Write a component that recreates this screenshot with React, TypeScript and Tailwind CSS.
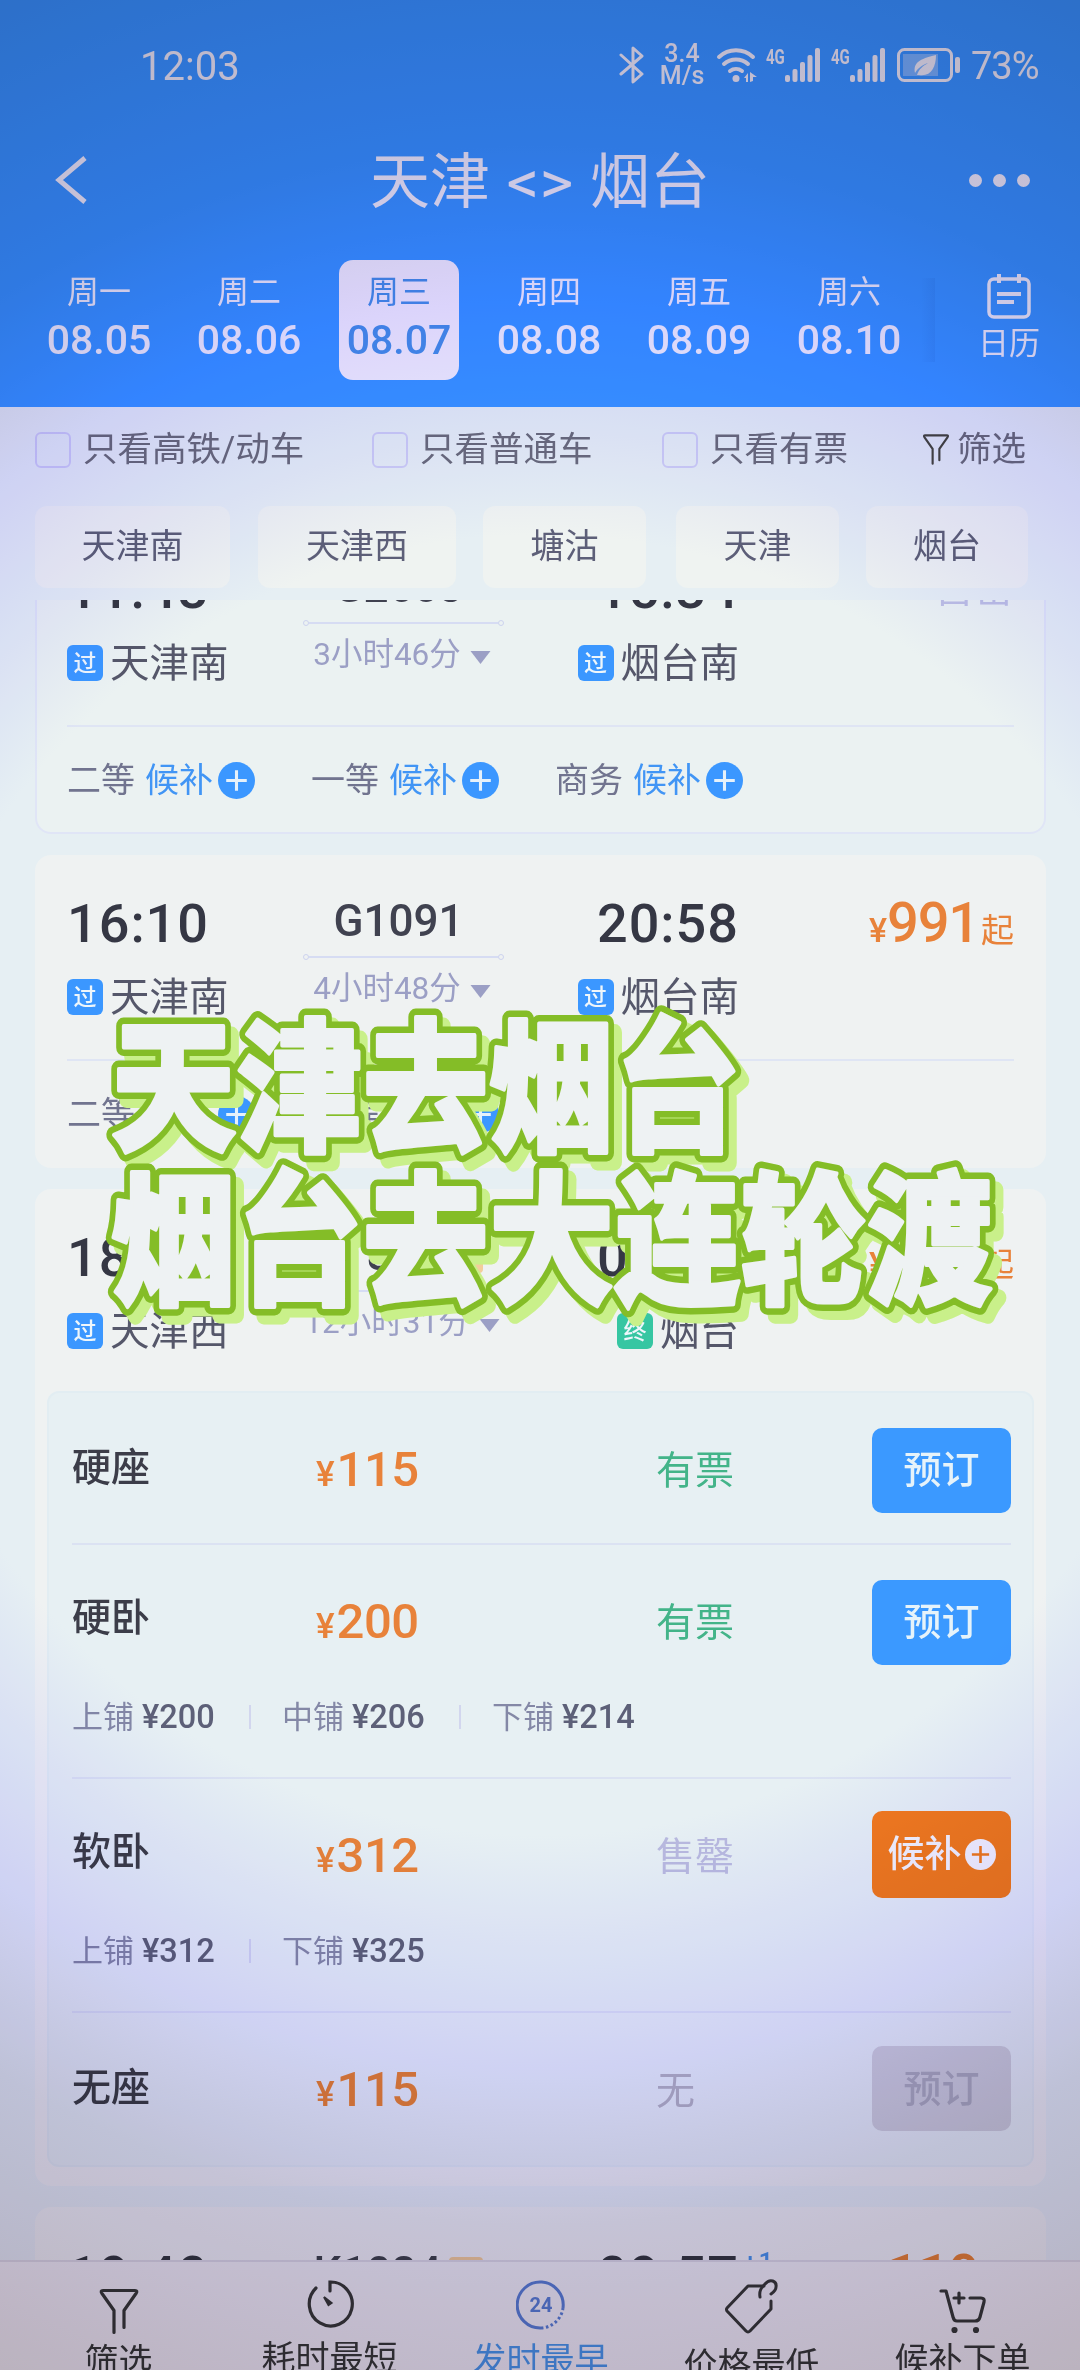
import type { ReactNode } from "react";

interface Stop {
	time: string;
	name: string;
	kind: "过" | "终";
	nextDay?: boolean;
}

interface Train {
	no: string;
	tag?: string;
	duration: string;
	from: Stop;
	to: Stop;
	price?: string;
}

interface Seat {
	name: string;
	price: string;
	status: "有票" | "售罄" | "无";
	berths?: { name: string; price: string }[];
}

const DATES = [
	{ week: "周一", date: "08.05" },
	{ week: "周二", date: "08.06" },
	{ week: "周三", date: "08.07", active: true },
	{ week: "周四", date: "08.08" },
	{ week: "周五", date: "08.09" },
	{ week: "周六", date: "08.10" },
];

const STATIONS = [
	{ name: "天津南", className: "w-[195px]" },
	{ name: "天津西", className: "ml-7 w-[198px]" },
	{ name: "塘沽", className: "ml-[27px] w-[163px]" },
	{ name: "天津", className: "ml-[30px] w-[163px]" },
	{ name: "烟台", className: "ml-[27px] w-[162px]" },
];

const TRAINS: Train[] = [
	{
		no: "G2603",
		duration: "3小时46分",
		from: { time: "11:48", name: "天津南", kind: "过" },
		to: { time: "15:34", name: "烟台南", kind: "过" },
	},
	{
		no: "G1091",
		duration: "4小时48分",
		from: { time: "16:10", name: "天津南", kind: "过" },
		to: { time: "20:58", name: "烟台南", kind: "过" },
		price: "991",
	},
	{
		no: "K1812",
		tag: "带",
		duration: "12小时31分",
		from: { time: "18:49", name: "天津西", kind: "过" },
		to: { time: "07:20", name: "烟台", kind: "终" },
		price: "115",
	},
	{
		no: "K1024",
		tag: "带",
		duration: "14小时17分",
		from: { time: "19:40", name: "天津", kind: "过" },
		to: { time: "09:57", name: "烟台", kind: "终", nextDay: true },
		price: "119",
	},
];

const SEATS: Seat[] = [
	{ name: "硬座", price: "115", status: "有票" },
	{
		name: "硬卧",
		price: "200",
		status: "有票",
		berths: [
			{ name: "上铺", price: "200" },
			{ name: "中铺", price: "206" },
			{ name: "下铺", price: "214" },
		],
	},
	{
		name: "软卧",
		price: "312",
		status: "售罄",
		berths: [
			{ name: "上铺", price: "312" },
			{ name: "下铺", price: "325" },
		],
	},
	{ name: "无座", price: "115", status: "无" },
];

const STATUS_COLOR = {
	有票: "text-[#43b489]",
	售罄: "text-[#b9bade]",
	无: "text-[#b4b4c2]",
};

const Signal = () => (
	<div className="flex h-[34px]">
		<span className="w-[19px] origin-left scale-x-75 text-[20px] leading-[18px] font-bold">
			4G
		</span>
		<svg width="36" height="34" viewBox="0 0 36 34" fill="currentColor">
			<rect x="0" y="27" width="5" height="7" rx="2" />
			<rect x="7.5" y="21" width="5" height="13" rx="2" />
			<rect x="15" y="14" width="5" height="20" rx="2" />
			<rect x="22.5" y="7" width="5" height="27" rx="2" />
			<rect x="30" y="0" width="5" height="34" rx="2" />
		</svg>
	</div>
);

const StatusBar = () => (
	<div className="flex h-[130px] items-center pr-[41px] pl-[140px] text-[#eef0f5]">
		<span className="mt-[3px] text-[40px] leading-none">12:03</span>
		<svg
			className="ml-auto"
			width="26"
			height="38"
			viewBox="0 0 26 38"
			fill="none"
			stroke="currentColor"
			strokeWidth="3"
			strokeLinejoin="round"
			strokeLinecap="round"
		>
			<path d="M2 9l21 19-9 8V2l9 8L2 28" />
		</svg>
		<div className="ml-[15px] flex w-[44px] flex-col items-center text-[25px] leading-[22px] font-medium">
			<span>3.4</span>
			<span>M/s</span>
		</div>
		<svg className="ml-[12px]" width="42" height="36" viewBox="0 0 42 36" fill="none">
			<g stroke="currentColor" strokeWidth="4" strokeLinecap="round">
				<path d="M3 10a25 25 0 0 1 34 0" />
				<path d="M8 17a18 18 0 0 1 24 0" />
				<path d="M14 24a10 10 0 0 1 12 0" />
			</g>
			<circle cx="20" cy="31.500" r="3.500" fill="currentColor" />
			<path d="M28 31l4-5v9h-2v-4zM34 25l7 5h-4v4l-3 1z" fill="currentColor" />
		</svg>
		<div className="ml-[8px] flex gap-[10px]">
			<Signal />
			<Signal />
		</div>
		<svg className="ml-[11px]" width="66" height="34" viewBox="0 0 66 34" fill="none">
			<rect x="1.500" y="1.500" width="53" height="31" rx="6" stroke="currentColor" strokeWidth="3" />
			<rect x="6" y="6" width="35" height="22" fill="currentColor" opacity="0.35" />
			<path
				d="M18 25c-2-10 4-14 21-18 0 12-5 22-17 20l-2 0c2-6 6-9 11-12-6 2-10 5-13 10z"
				fill="currentColor"
			/>
			<rect x="58" y="9" width="5" height="16" rx="2" fill="currentColor" />
		</svg>
		<span className="mt-[2px] ml-[8px] w-[68px] text-[38px] leading-none tracking-[-1px]">73%</span>
	</div>
);

const Header = () => (
	<header className="h-[407px] shrink-0 bg-[#3996ff] text-[#f2f3fa]">
		<StatusBar />
		<div className="flex h-[100px] items-center justify-between px-[50px]">
			<div className="w-[70px] pl-[2px]">
				<svg width="36" height="50" viewBox="0 0 36 50" fill="none" stroke="currentColor" strokeWidth="5">
					<path d="M33 3L7 25l26 22" />
				</svg>
			</div>
			<h1 className="mt-[6px] flex items-center gap-[19px] text-[60px] leading-none">
				<span>天津</span>
				<span className="inline-block scale-x-108">&lt;&gt;</span>
				<span>烟台</span>
			</h1>
			<div className="flex w-[70px] justify-end gap-[11px]">
				<i className="size-[13px] rounded-full bg-current" />
				<i className="size-[13px] rounded-full bg-current" />
				<i className="size-[13px] rounded-full bg-current" />
			</div>
		</div>
		<div className="flex pt-[30px] pl-[39px]">
			<div className="flex w-[882px] gap-[30px]">
				{DATES.map(({ week, date, active }) => (
					<div
						key={date}
						className={`flex h-[120px] w-[120px] shrink-0 flex-col items-center rounded-[14px] pt-[14px] ${
							active ? "bg-[#f4f2fb] text-[#4791e6]" : ""
						}`}
					>
						<span className="text-[32px] leading-[36px]">{week}</span>
						<span className="mt-[8px] text-[41px] leading-[44px] font-medium">{date}</span>
					</div>
				))}
			</div>
			<div className="h-[84px] w-[14px] self-center bg-linear-to-r from-transparent to-[#2f7ee6]/30" />
			<div className="ml-[43px] flex flex-col items-center pt-[14px]">
				<svg width="44" height="46" viewBox="0 0 44 46" fill="none" stroke="currentColor" strokeWidth="3.500">
					<rect x="2" y="5" width="40" height="38" rx="5" />
					<path d="M12 0v9M32 0v9M10 20h24M10 28h17" strokeWidth="4" />
				</svg>
				<span className="mt-[6px] text-[31px] leading-[36px]">日历</span>
			</div>
		</div>
	</header>
);

const Funnel = ({ className }: { className?: string }) => (
	<svg
		className={className}
		viewBox="0 0 40 46"
		fill="none"
		stroke="currentColor"
		strokeWidth="3.200"
		strokeLinejoin="round"
		strokeLinecap="round"
	>
		<path d="M15 44V22L3 5q-2-3 1-3h32q3 0 1 3L25 22v17" />
	</svg>
);

const Check = ({ className, children }: { className: string; children: ReactNode }) => (
	<label className={`flex items-center gap-[12px] ${className}`}>
		<i className="size-[36px] rounded-[6px] border-2 border-[#cdcdf3]" />
		{children}
	</label>
);

const Filters = () => (
	<section className="shrink-0">
		<div className="flex h-[85px] items-center pl-[35px] text-[34.500px] leading-none whitespace-nowrap text-[#6a6b7c]">
			<Check className="w-[337px]">只看高铁/动车</Check>
			<Check className="w-[290px]">只看普通车</Check>
			<Check className="w-[259px]">只看有票</Check>
			<Funnel className="mr-[6px] h-[31px] w-[30px] text-[#444]" />
			<span>筛选</span>
		</div>
		<div className="mt-[14px] flex h-[94px] pl-[35px] text-[34px] text-[#5d5f78]">
			{STATIONS.map(({ name, className }) => (
				<div
					key={name}
					className={`flex h-[82px] items-center justify-center rounded-[12px] bg-[#eff3f1] leading-none ${className}`}
				>
					<span className="-mt-[2px]">{name}</span>
				</div>
			))}
		</div>
	</section>
);

const Station = ({ name, kind }: Stop) => (
	<div className="mt-[26px] flex h-[40px] items-center gap-[7px]">
		<span
			className={`flex size-[36px] items-center justify-center rounded-[6px] text-[23px] leading-none font-medium text-[#eef6fb] ${
				kind === "过" ? "bg-[#3b97ff]" : "bg-[#36c6a2]"
			}`}
		>
			{kind}
		</span>
		<span className="mt-[1px] text-[39.500px] leading-[40px] text-[#55576a]">{name}</span>
	</div>
);

const TrainInfo = ({ no, tag, duration, from, to, price }: Train) => (
	<div className="grid h-[204px] grid-cols-[236px_201px_235px_1fr] pt-[42px]">
		<div>
			<div className="text-[54px] leading-[54px] font-medium tracking-[1px] text-[#353744]">{from.time}</div>
			<Station {...from} />
		</div>
		<div className="flex flex-col items-center pt-[2px]">
			<div className="mr-[10px] flex h-[45px] items-center gap-[8px] text-[44px] leading-[45px] font-medium text-[#404250]">
				{no}
				{tag && (
					<span className="flex size-[34px] items-center justify-center rounded-[4px] bg-[#f3cd9c] text-[24px] leading-none text-[#7d5232]">
						{tag}
					</span>
				)}
			</div>
			<div className="mt-[10px] flex w-full items-center">
				<i className="size-[6px] rounded-full border border-[#cdd3ef]" />
				<i className="h-[2px] flex-1 bg-[#d6dcf3]" />
				<i className="size-[6px] rounded-full border border-[#cdd3ef]" />
			</div>
			<div className="mt-[11px] mr-[3px] flex items-center gap-[9px] text-[31.500px] leading-[36px] whitespace-nowrap text-[#9b9fc5]">
				{duration}
				<svg className="mt-[5px]" width="21" height="14" viewBox="0 0 20 14" fill="currentColor">
					<path d="M0 0h20L10 13z" />
				</svg>
			</div>
		</div>
		<div className="flex flex-col items-end">
			<div className="relative text-[54px] leading-[54px] font-medium tracking-[1px] text-[#353744]">
				{to.time}
				{to.nextDay && (
					<span className="absolute top-[-2px] left-full ml-1 text-[26px] leading-[30px] text-[#4a94e8]">+1</span>
				)}
			</div>
			<Station {...to} />
		</div>
		<div className="-mt-[1px] text-right leading-[54px] whitespace-nowrap text-[#e8823a]">
			{price ? (
				<>
					<span className="text-[34px] font-medium">¥</span>
					<span className="text-[56px] font-medium tracking-[-1.200px]">{price}</span>
					<span className="ml-[2px] text-[33px]">起</span>
				</>
			) : (
				<span className="text-[40px] text-[#bdbfe3]">售罄</span>
			)}
		</div>
	</div>
);

const PlusDot = ({ size, dot, cross }: { size: number; dot: string; cross: string }) => (
	<svg width={size} height={size} viewBox="0 0 36 36">
		<circle cx="18" cy="18" r="18" fill={dot} />
		<path d="M18 8v20M8 18h20" stroke={cross} strokeWidth="3" />
	</svg>
);

const Waitlist = ({ seats }: { seats: string[] }) => (
	<div className="flex h-[108px] items-center border-t-2 border-[#dfe5f4]">
		{seats.map((seat) => (
			<div key={seat} className="flex w-[244px] items-center text-[34px] leading-none text-[#71748f]">
				{seat}
				<span className="mr-[5px] ml-[10px] text-[#4195f5]">候补</span>
				<PlusDot size={37} dot="#3b97ff" cross="#e6f1fa" />
			</div>
		))}
	</div>
);

const SeatButton = ({ status }: { status: Seat["status"] }) => {
	if (status === "售罄") {
		return (
			<button
				type="button"
				className="-mt-[3px] flex h-[87px] w-[139px] items-center justify-center gap-[3px] rounded-[10px] bg-[#f47a20] text-[37px] leading-none font-medium text-[#f6f6fa]"
			>
				候补
				<PlusDot size={31} dot="#f6f6fa" cross="#f47a20" />
			</button>
		);
	}
	return (
		<button
			type="button"
			className={`h-[85px] w-[139px] rounded-[10px] text-[38px] leading-none font-medium ${
				status === "有票" ? "bg-[#3b99ff] text-[#e6f3fa]" : "-mt-[3px] bg-[#cfd0da] text-[#acacbd]"
			}`}
		>
			预订
		</button>
	);
};

const SeatRow = ({ seat, last }: { seat: Seat; last: boolean }) => (
	<div
		className={`pt-[34px] ${last ? "" : "border-b-2 border-[#dbe2f2]"} ${
			seat.berths ? "h-[234px]" : "h-[152px]"
		}`}
	>
		<div className="flex h-[86px] items-center text-[39px] leading-none">
			<span className={`w-[243px] font-medium text-[#3c3d49] ${seat.berths ? "-mt-[7px]" : "-mt-[3px]"}`}>
				{seat.name}
			</span>
			<span className="-mt-[2px] flex w-[341px] items-baseline pl-[1px] text-[#e8823a]">
				<span className="text-[35px] font-medium">¥</span>
				<span className="ml-[2px] text-[49px] font-medium tracking-[-0.500px]">{seat.price}</span>
			</span>
			<span className={`mt-[2px] flex-1 ${STATUS_COLOR[seat.status]}`}>{seat.status}</span>
			<SeatButton status={seat.status} />
		</div>
		{seat.berths && (
			<div className="mt-[34px] flex h-[36px] items-center text-[31px] leading-none text-[#8488a6]">
				{seat.berths.map(({ name, price }, i) => (
					<div key={name} className="flex w-[210px] items-center">
						{i > 0 && <i className="-ml-[33px] mr-[31px] h-[24px] w-[2px] bg-[#d2d6ee]" />}
						{name}
						<span className="ml-[8px] text-[32.500px] font-medium text-[#5d6078]">¥{price}</span>
					</div>
				))}
			</div>
		)}
	</div>
);

const Card = ({ className = "", children }: { className?: string; children: ReactNode }) => (
	<article className={`mr-[34px] ml-[35px] shrink-0 rounded-[16px] bg-[#eff2f2] px-[32px] ${className}`}>{children}</article>
);

const TABS = [
	{ name: "筛选", raised: true, icon: <Funnel className="mt-[10px] h-[47px] w-[40px]" /> },
	{
		name: "耗时最短",
		icon: (
			<svg width="48" height="50" viewBox="0 0 48 50" fill="none" stroke="currentColor" strokeWidth="3.200" strokeLinecap="round">
				<path d="M10 10A21.500 22 0 1 0 24 4v9" />
				<path d="M18 19l4.500 8 3-2z" fill="currentColor" strokeWidth="2" />
			</svg>
		),
	},
	{
		name: "发时最早",
		active: true,
		icon: (
			<svg className="mt-[2px]" width="50" height="50" viewBox="0 0 50 50" fill="none" stroke="#5b80d2" strokeWidth="3">
				<path d="M47 28A23 23 0 1 0 25 48" />
				<path d="M25 48a23 23 0 0 0 22-20" strokeDasharray="2.500 2.500" />
				<text
					x="25"
					y="32"
					textAnchor="middle"
					fontSize="20"
					fontWeight="700"
					fill="#5b80d2"
					stroke="none"
				>
					24
				</text>
			</svg>
		),
	},
	{
		name: "价格最低",
		icon: (
			<svg
				className="-mt-[1px]"
				width="56"
				height="58"
				viewBox="0 0 56 58"
				fill="none"
				stroke="currentColor"
				strokeWidth="3"
				strokeLinejoin="round"
				strokeLinecap="round"
			>
				<path d="M40 9H24L3 31q-1 1 0 3l19 20q2 2 4 0l21-22V24" />
				<path d="M36 20c-1-6 1-9 5-13 5-6 12-3 11 3 0 3-2 5-5 7" />
			</svg>
		),
	},
	{
		name: "候补下单",
		raised: true,
		icon: (
			<svg
				className="mt-[10px]"
				width="48"
				height="46"
				viewBox="0 0 48 46"
				fill="none"
				stroke="currentColor"
				strokeWidth="3.200"
				strokeLinecap="round"
				strokeLinejoin="round"
			>
				<path d="M2 3h5l7 26q1 4 4 4h18q4 0 5-4l4-15q1-4-3-4H31" />
				<path d="M20 5v10M15 10h10" />
				<circle cx="15.500" cy="42" r="1.500" fill="currentColor" />
				<circle cx="37" cy="42" r="1.500" fill="currentColor" />
			</svg>
		),
	},
];

const TabBar = () => (
	<nav className="flex h-[110px] shrink-0 overflow-hidden border-t-2 border-[#dcdbe4] bg-[#f0f0f3] px-[13px]">
		{TABS.map(({ name, icon, active, raised }) => (
			<div
				key={name}
				className={`flex w-[211px] shrink-0 flex-col items-center pt-[16px] text-[34px] leading-[40px] ${
					active ? "text-[#4c98e8]" : "text-[#38383b]"
				}`}
			>
				<div className="flex h-[58px] items-center">{icon}</div>
				<span className={raised ? "mt-[6px]" : "mt-[10px]"}>{name}</span>
			</div>
		))}
	</nav>
);

// Sticker caption: the outline and its drop reuse the white lettering
const Caption = () => (
	<svg
		className="absolute top-[990px] left-[90px]"
		width="930"
		height="340"
		viewBox="0 0 930 340"
		strokeLinejoin="round"
	>
		<use href="#caption" x="8" y="9" fill="#c9f08a" stroke="#c9f08a" strokeWidth="17" />
		<use href="#caption" fill="#84bd27" stroke="#84bd27" strokeWidth="17" />
		<g fill="#eef2f3" stroke="#eef2f3" strokeWidth="4">
			<g id="caption" className="text-[143px] font-black tracking-[1px]">
				<text transform="translate(21 150) scale(0.875 1)">天津去烟台</text>
				<text transform="translate(21 303) scale(0.875 1)">烟台去大连轮渡</text>
			</g>
		</g>
	</svg>
);

const App = () => (
	<div className="relative flex h-[2370px] w-[1080px] flex-col overflow-hidden bg-[#e6eff3] font-['Roboto','Noto_Sans_CJK_SC',sans-serif]">
		<Header />
		<Filters />
		<main className="flex min-h-0 flex-1 flex-col gap-[21px] overflow-hidden">
			<Card className="-mt-[81px] h-[315px] border-2 border-[#e0e5f6] !bg-[#ebf2f2] !px-[30px]">
				<TrainInfo {...TRAINS[0]} />
				<Waitlist seats={["二等", "一等", "商务"]} />
			</Card>
			<Card className="h-[313px]">
				<TrainInfo {...TRAINS[1]} />
				<Waitlist seats={["二等", "一等"]} />
			</Card>
			<Card className="h-[997px]">
				<TrainInfo {...TRAINS[2]} />
				<div className="-mx-[20px] -mt-[2px] h-[776px] rounded-[12px] border-2 border-[#e2edf2] bg-[#e7f0f3] pr-[21px] pl-[23px]">
					{SEATS.map((seat, i) => (
						<SeatRow key={seat.name} seat={seat} last={i === SEATS.length - 1} />
					))}
				</div>
			</Card>
			<Card>
				<TrainInfo {...TRAINS[3]} />
			</Card>
		</main>
		<TabBar />
		<Caption />
		<div className="pointer-events-none absolute inset-0 bg-[radial-gradient(circle_1300px_at_540px_1185px,#fff_0%,#fff_50%,#f2f1ff_58%,#e5e0ff_68%,#d3cee2_80%,#c7bec9_100%)] mix-blend-multiply" />
	</div>
);

export default App;
